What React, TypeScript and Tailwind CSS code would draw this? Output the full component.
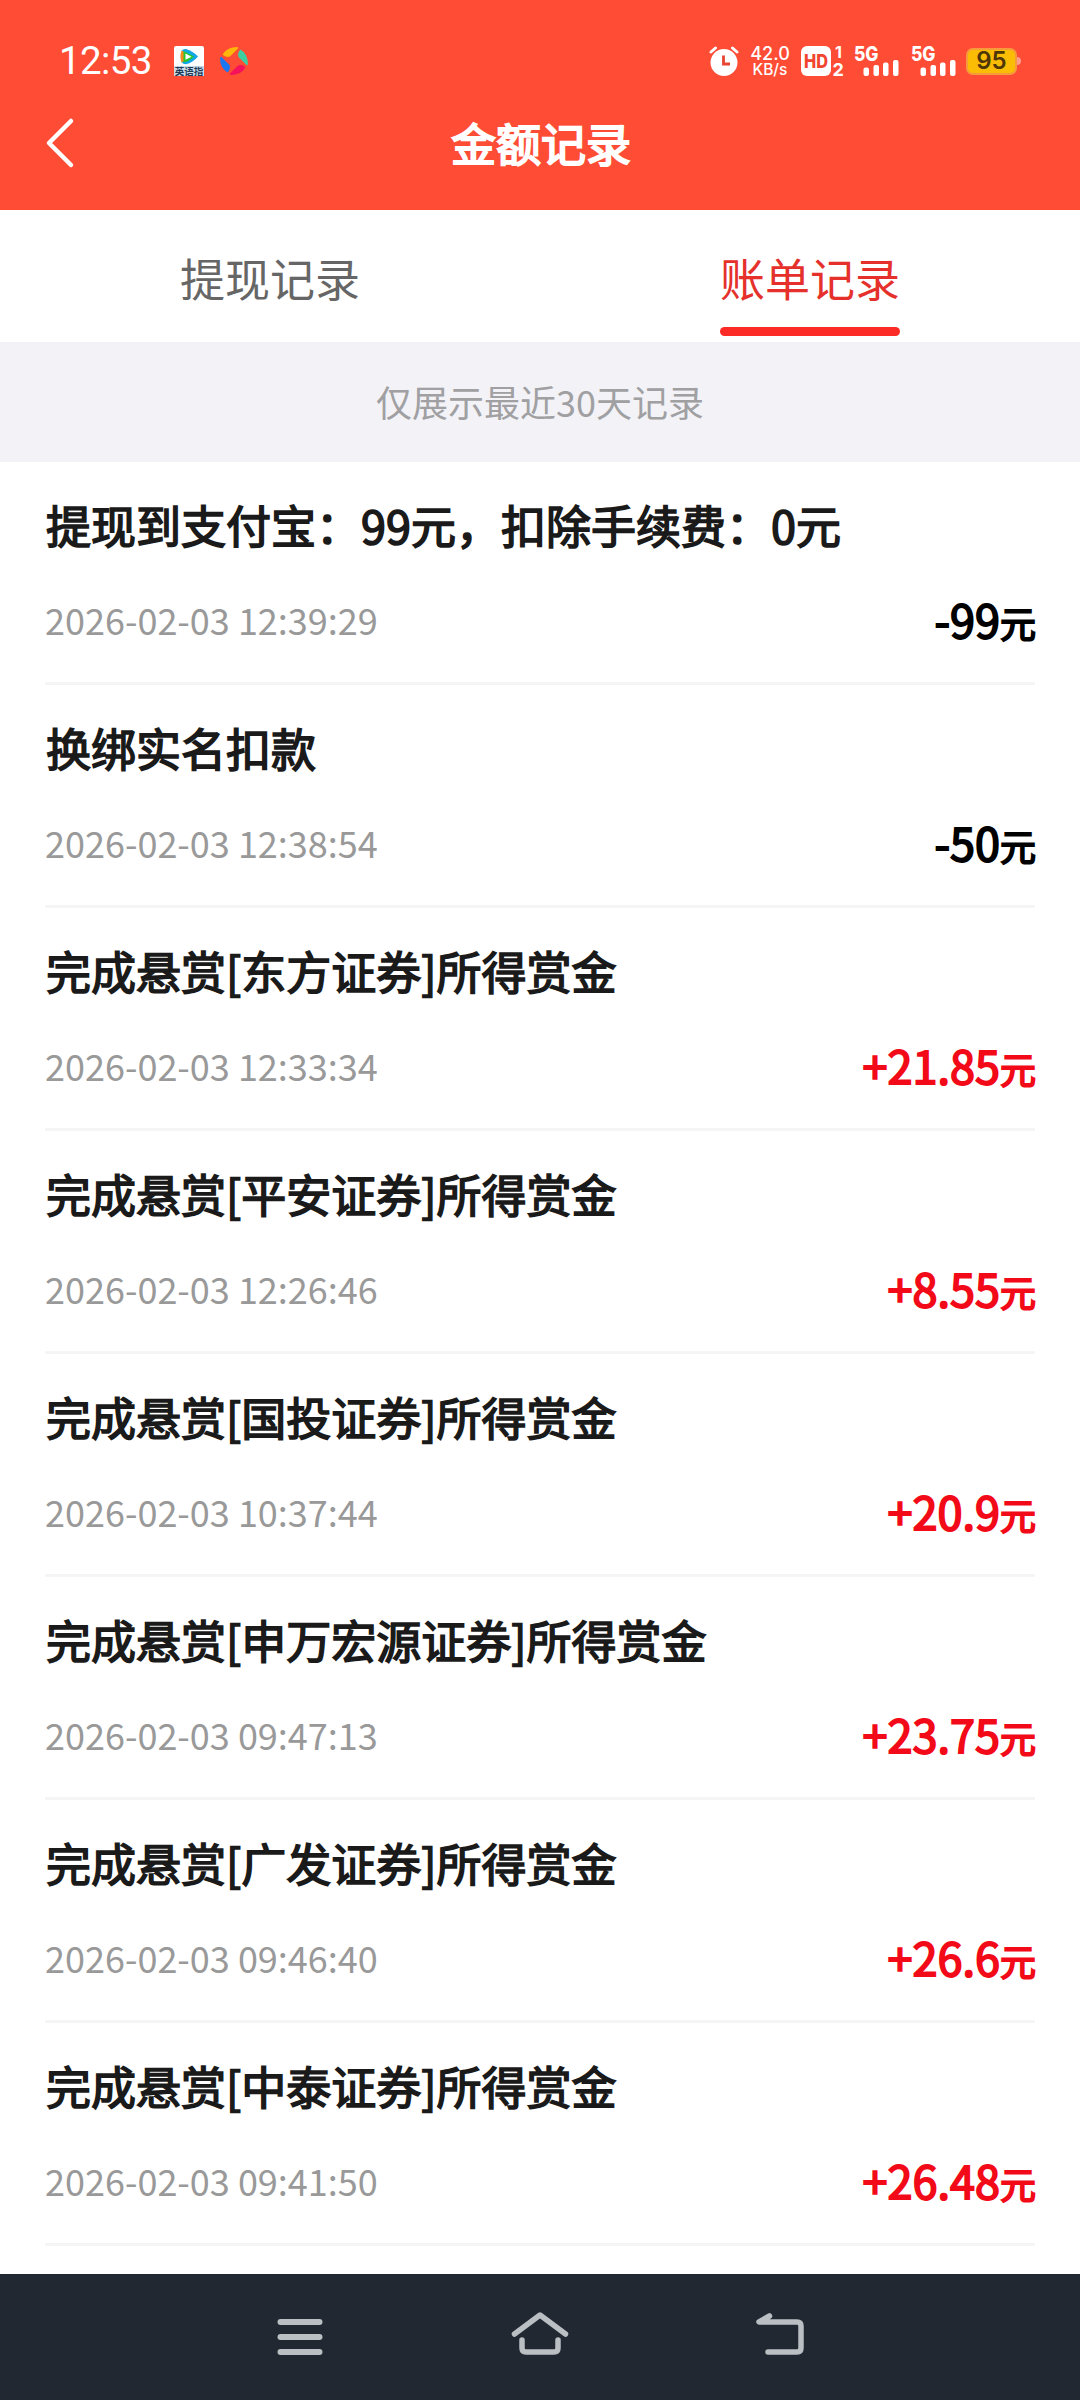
import { clsx } from "clsx";

type RecordItem = {
  title: string;
  time: string;
  amount: string;
};

const records: RecordItem[] = [
  { title: "提现到支付宝：99元，扣除手续费：0元", time: "2026-02-03 12:39:29", amount: "-99" },
  { title: "换绑实名扣款", time: "2026-02-03 12:38:54", amount: "-50" },
  { title: "完成悬赏[东方证券]所得赏金", time: "2026-02-03 12:33:34", amount: "+21.85" },
  { title: "完成悬赏[平安证券]所得赏金", time: "2026-02-03 12:26:46", amount: "+8.55" },
  { title: "完成悬赏[国投证券]所得赏金", time: "2026-02-03 10:37:44", amount: "+20.9" },
  { title: "完成悬赏[申万宏源证券]所得赏金", time: "2026-02-03 09:47:13", amount: "+23.75" },
  { title: "完成悬赏[广发证券]所得赏金", time: "2026-02-03 09:46:40", amount: "+26.6" },
  { title: "完成悬赏[中泰证券]所得赏金", time: "2026-02-03 09:41:50", amount: "+26.48" },
];

function VideoAppIcon() {
  return (
    <svg className="overflow-visible" width="30" height="30" viewBox="0 0 30 30">
      <rect width="30" height="30" rx="2" fill="#fff" />
      <path d="M8 4.5 Q9 2.5 12 3 Q19 5 24 10.5 Q19 16.5 12 18.3 Q9 18.5 8 16.5 Q5.5 10.5 8 4.5Z" fill="#12a8e8" />
      <path d="M7.5 4.5 Q5.5 10.5 7.5 16.5 L10.5 15 V6Z" fill="#f58a1f" />
      <path d="M9.5 16.5 V5 L20 10.5 Q15 15.5 9.5 16.5Z" fill="#28c52c" />
      <path d="M11.5 7.5 L17.5 10.7 L11.5 13.8Z" fill="#fff" />
      <rect y="20" width="30" height="10" fill="#c9dbe6" />
      <text x="15" y="28.5" textAnchor="middle" fontSize="9.5" fontWeight="700" fill="#1d3a57" fontFamily="'Noto Sans CJK SC', sans-serif">
        英语指
      </text>
    </svg>
  );
}

function PinwheelIcon() {
  return (
    <svg width="30" height="30" viewBox="0 0 30 30">
      <path d="M3.5 8.5 Q8 1 18 1 L19.5 2 L11 10.5 Q7 12 3.5 8.5Z" fill="#ffb60a" />
      <path d="M21.5 3.5 Q29 8 29 18 L28 19.5 L19.5 11 Q18 7 21.5 3.5Z" fill="#3ecfa0" />
      <path d="M26.5 21.5 Q22 29 12 29 L10.5 28 L19 19.5 Q23 18 26.5 21.5Z" fill="#f5115c" />
      <path d="M8.5 26.5 Q1 22 1 12 L2 10.5 L10.5 19 Q12 23 8.5 26.5Z" fill="#1b78f2" />
    </svg>
  );
}

function AlarmIcon() {
  return (
    <svg width="30" height="30" viewBox="0 0 30 30" fill="none">
      <circle cx="15" cy="16.5" r="13.5" fill="#fff" />
      <path d="M2 6 L6.5 2 M28 6 L23.5 2" stroke="#fff" strokeWidth="3" strokeLinecap="round" />
      <path d="M14.5 9.5 V18 H21" stroke="#e8442f" strokeWidth="2.8" />
    </svg>
  );
}

function Signal() {
  return (
    <svg className="overflow-visible" width="46" height="32" viewBox="0 0 46 32" fill="#fff">
      <text x="0" y="15.5" fontSize="20" fontWeight="800" textLength="24.5" lengthAdjust="spacingAndGlyphs" fontFamily="Inter, sans-serif">
        5G
      </text>
      <rect x="9.5" y="22.5" width="5.5" height="8.5" rx="2" />
      <rect x="19.5" y="20" width="5.5" height="11" rx="2" />
      <rect x="29" y="17.5" width="5.5" height="13.5" rx="2" />
      <rect x="39" y="15" width="5.5" height="16" rx="2" />
    </svg>
  );
}

function StatusBar() {
  return (
    <div className="flex h-[90px] items-center justify-between pt-8 pr-[59px] pl-[59px] text-white">
      <div className="flex items-center">
        <span className="w-[115px] font-[Roboto,sans-serif] text-[38.5px] leading-none tracking-[-0.6px]">12:53</span>
        <VideoAppIcon />
        <div className="ml-[15px]">
          <PinwheelIcon />
        </div>
      </div>
      <div className="flex items-center">
        <AlarmIcon />
        <div className="ml-[11px] flex w-10 flex-col items-center font-[Inter,sans-serif] font-medium">
          <span className="text-[18px] leading-[17px]">42.0</span>
          <span className="text-[15.5px] leading-[15px]">KB/s</span>
        </div>
        <svg className="ml-[11px] overflow-visible" width="44" height="32" viewBox="0 0 44 32">
          <rect y="1" width="30" height="30" rx="6" fill="#fff" />
          <text x="3" y="23" fontSize="19" fontWeight="800" textLength="24" lengthAdjust="spacingAndGlyphs" fill="#f0452e" fontFamily="Inter, sans-serif">
            HD
          </text>
          <text x="34" y="12.5" fontSize="16" fontWeight="700" fill="#fff" fontFamily="Inter, sans-serif">
            1
          </text>
          <text x="31.5" y="31" fontSize="18" fontWeight="700" fill="#fff" fontFamily="Inter, sans-serif">
            2
          </text>
        </svg>
        <div className="ml-[9px]">
          <Signal />
        </div>
        <div className="ml-[11px]">
          <Signal />
        </div>
        <div className="ml-[9px] flex items-center">
          <div className="flex h-[27px] w-[51px] items-center justify-center rounded-[7px] border-2 border-[#f79b3a] bg-[#fbbc05] font-[Inter,sans-serif] text-[24px] leading-none font-semibold text-[#4f3606]">
            95
          </div>
          <div className="h-2 w-1 rounded-r bg-[#ff9d8d]" />
        </div>
      </div>
    </div>
  );
}

function Header() {
  return (
    <header className="h-[210px] bg-[#ff4c35]">
      <StatusBar />
      <div className="grid h-[110px] grid-cols-[180px_1fr_180px] items-center">
        <svg className="-mt-1 ml-[43px]" width="32" height="52" viewBox="0 0 32 52" fill="none">
          <path d="M28 4 L6 26 L28 48" stroke="#fff" strokeWidth="4.5" strokeLinecap="round" strokeLinejoin="round" />
        </svg>
        <h1 className="-mt-1.5 pl-0.5 text-center text-[45px] leading-none text-white [-webkit-text-stroke:2px_white]">
          金额记录
        </h1>
      </div>
    </header>
  );
}

function Tabs() {
  return (
    <nav className="flex h-[132px] bg-white text-[45px] leading-none">
      <button className="flex flex-1 flex-col items-center pt-[45px] text-[#666]">提现记录</button>
      <button className="flex flex-1 flex-col items-center pt-[45px] text-[#e5302b]">
        账单记录
        <span className="mt-[27px] h-[9px] w-[180px] rounded-full bg-[#fc2b26]" />
      </button>
    </nav>
  );
}

function RecordRow({ item }: { item: RecordItem }) {
  const income = item.amount.startsWith("+");

  return (
    <li className="flex h-[223px] flex-col border-b-[3px] border-[#f5f5f5]">
      <h2 className="pt-10 pl-px text-[45px] leading-[45px] text-[#1a1a1a] [-webkit-text-stroke:1.6px_#1a1a1a]">
        {item.title}
      </h2>
      <div className="mt-[45px] flex items-start justify-between">
        <time className="text-[36px] leading-[54px] text-[#999]">{item.time}</time>
        <p
          className={clsx(
            "-mr-px text-[45px] leading-[54px]",
            income
              ? "text-[#f20a18] [-webkit-text-stroke:1.8px_#f20a18]"
              : "text-black [-webkit-text-stroke:1.8px_black]"
          )}
        >
          {item.amount}
          <span className="text-[36px]">元</span>
        </p>
      </div>
    </li>
  );
}

function NavigationBar() {
  return (
    <footer className="flex h-[126px] items-start justify-center gap-[180px] bg-[#222831] pt-8">
      <svg width="60" height="60" viewBox="0 0 60 60" stroke="#babfc4" strokeWidth="6" strokeLinecap="round" fill="none">
        <path d="M10.5 16 H49.5 M10.5 31 H49.5 M10.5 46 H49.5" />
      </svg>
      <svg width="60" height="60" viewBox="0 0 60 60" stroke="#babfc4" strokeWidth="5.5" strokeLinecap="round" strokeLinejoin="round" fill="none">
        <path d="M4.5 28 L30 9 L55.5 28" />
        <path d="M12 34 V42 Q12 46 16 46 H44 Q48 46 48 42 V34" />
      </svg>
      <svg width="60" height="60" viewBox="0 0 60 60" stroke="#babfc4" strokeWidth="5.5" strokeLinecap="round" strokeLinejoin="round" fill="none">
        <path d="M19.5 10 L9 16 H47 Q51 16 51 20 V42 Q51 46 47 46 H18" />
      </svg>
    </footer>
  );
}

export default function App() {
  return (
    <div className="flex h-[2400px] w-[1080px] flex-col overflow-hidden bg-white font-['Noto_Sans_CJK_SC',sans-serif]">
      <Header />
      <Tabs />
      <div className="flex h-[120px] items-center justify-center bg-[#f2f2f7] pb-0.5 text-[36px] leading-none text-[#a0a0a2]">
        仅展示最近30天记录
      </div>
      <ul className="flex-1 px-[45px]">
        {records.map((item) => (
          <RecordRow key={item.time} item={item} />
        ))}
      </ul>
      <NavigationBar />
    </div>
  );
}
